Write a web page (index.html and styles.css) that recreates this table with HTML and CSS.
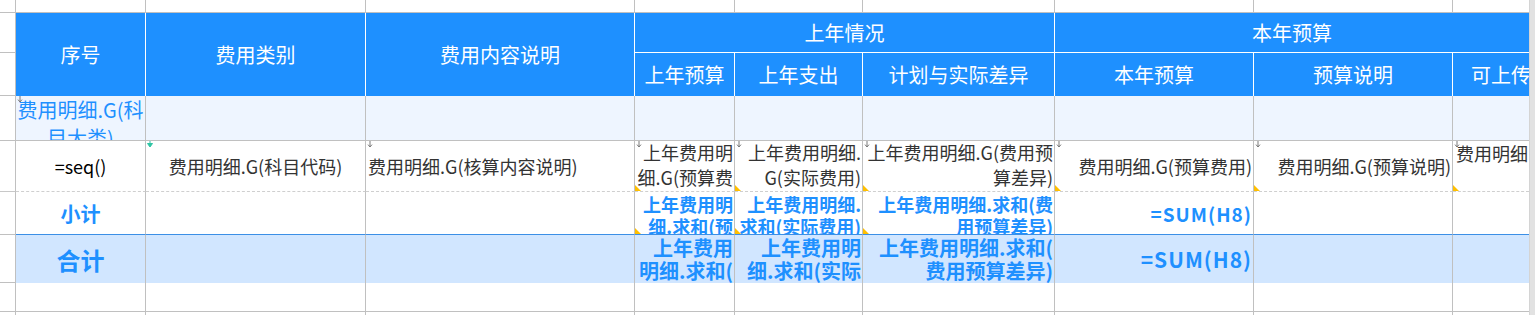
FILE: index.html
```html
<!DOCTYPE html>
<html lang="zh-CN">
<head>
<meta charset="utf-8">
<title>费用明细</title>
<link rel="stylesheet" href="styles.css">
</head>
<body>
<div class="sheet">
  <div class="scroll"></div>

  <!-- row 0 -->
  <div class="g"></div>
  <div class="c"></div><div class="c"></div><div class="c"></div><div class="c"></div>
  <div class="c"></div><div class="c"></div><div class="c"></div><div class="c"></div>
  <div class="c last"></div>

  <!-- header row 1 -->
  <div class="g"></div>
  <div class="h rs2">序号</div>
  <div class="h rs2">费用类别</div>
  <div class="h rs2">费用内容说明</div>
  <div class="h cs3">上年情况</div>
  <div class="h cs3 last">本年预算</div>

  <!-- header row 2 -->
  <div class="g"></div>
  <div class="h">上年预算</div>
  <div class="h">上年支出</div>
  <div class="h">计划与实际差异</div>
  <div class="h">本年预算</div>
  <div class="h">预算说明</div>
  <div class="h last hleft">可上传</div>

  <!-- row 3 : group row -->
  <div class="g"></div>
  <div class="c r3 grp">
    <svg class="mk" width="6" height="7" viewBox="0 0 6 7"><path d="M3 0V6M1 3.6L3 6L5 3.6" fill="none" stroke="#7a7a7a" stroke-width="1"/></svg>
    <span class="grptext">费用明细.G(科<br>目大类)</span>
  </div>
  <div class="c r3"></div><div class="c r3"></div><div class="c r3"></div><div class="c r3"></div>
  <div class="c r3"></div><div class="c r3"></div><div class="c r3"></div><div class="c r3 last"></div>

  <!-- row 4 : detail row -->
  <div class="g dash"></div>
  <div class="c r4 center black">=seq()</div>
  <div class="c r4 center">
    <svg class="mk" width="6" height="7" viewBox="0 0 6 7"><path d="M3 0V5M0.5 2.5H5.5L3 6Z" fill="#2fc5a4" stroke="#2fc5a4" stroke-width="1"/></svg>
    费用明细.G(科目代码)
  </div>
  <div class="c r4 left">
    <svg class="mk" width="6" height="7" viewBox="0 0 6 7"><path d="M3 0V6M1 3.6L3 6L5 3.6" fill="none" stroke="#7a7a7a" stroke-width="1"/></svg>
    费用明细.G(核算内容说明)
  </div>
  <div class="c r4 right">
    <svg class="mk" width="6" height="7" viewBox="0 0 6 7"><path d="M3 0V6M1 3.6L3 6L5 3.6" fill="none" stroke="#7a7a7a" stroke-width="1"/></svg>
    <span class="ml">上年费用明<br>细.G(预算费</span>
    <i class="tri"></i>
  </div>
  <div class="c r4 right">
    <svg class="mk" width="6" height="7" viewBox="0 0 6 7"><path d="M3 0V6M1 3.6L3 6L5 3.6" fill="none" stroke="#7a7a7a" stroke-width="1"/></svg>
    <span class="ml">上年费用明细.<br>G(实际费用)</span>
    <i class="tri"></i>
  </div>
  <div class="c r4 right">
    <svg class="mk" width="6" height="7" viewBox="0 0 6 7"><path d="M3 0V6M1 3.6L3 6L5 3.6" fill="none" stroke="#7a7a7a" stroke-width="1"/></svg>
    <span class="ml">上年费用明细.G(费用预<br>算差异)</span>
    <i class="tri"></i>
  </div>
  <div class="c r4 right">
    <svg class="mk" width="6" height="7" viewBox="0 0 6 7"><path d="M3 0V6M1 3.6L3 6L5 3.6" fill="none" stroke="#7a7a7a" stroke-width="1"/></svg>
    费用明细.G(预算费用)
    <i class="tri"></i>
  </div>
  <div class="c r4 right">
    <svg class="mk" width="6" height="7" viewBox="0 0 6 7"><path d="M3 0V6M1 3.6L3 6L5 3.6" fill="none" stroke="#7a7a7a" stroke-width="1"/></svg>
    费用明细.G(预算说明)
    <i class="tri"></i>
  </div>
  <div class="c r4 top last">
    <svg class="mk" width="6" height="7" viewBox="0 0 6 7"><path d="M3 0V6M1 3.6L3 6L5 3.6" fill="none" stroke="#7a7a7a" stroke-width="1"/></svg>
    <span class="ml">费用明细</span>
    <i class="tri"></i>
  </div>

  <!-- row 5 : subtotal -->
  <div class="g"></div>
  <div class="c r5 center label">小计</div>
  <div class="c r5"></div>
  <div class="c r5"></div>
  <div class="c r5 right">
    <span class="ml">上年费用明<br>细.求和(预</span>
    <i class="tri"></i>
  </div>
  <div class="c r5 right">
    <span class="ml">上年费用明细.<br>求和(实际费用)</span>
    <i class="tri"></i>
  </div>
  <div class="c r5 right">
    <span class="ml">上年费用明细.求和(费<br>用预算差异)</span>
    <i class="tri"></i>
  </div>
  <div class="c r5 right sum">=SUM(H8)</div>
  <div class="c r5"></div>
  <div class="c r5 last"></div>

  <!-- row 6 : total -->
  <div class="g"></div>
  <div class="c r6 center label">合计</div>
  <div class="c r6"></div>
  <div class="c r6"></div>
  <div class="c r6 right"><span class="ml">上年费用<br>明细.求和(</span></div>
  <div class="c r6 right"><span class="ml">上年费用明<br>细.求和(实际</span></div>
  <div class="c r6 right"><span class="ml">上年费用明细.求和(<br>费用预算差异)</span></div>
  <div class="c r6 right sum">=SUM(H8)</div>
  <div class="c r6"></div>
  <div class="c r6 last"></div>

  <!-- row 7 : empty -->
  <div class="g"></div>
  <div class="c"></div><div class="c"></div><div class="c"></div><div class="c"></div>
  <div class="c"></div><div class="c"></div><div class="c"></div><div class="c"></div>
  <div class="c last"></div>

  <!-- row 8 : partial -->
  <div class="g nb"></div>
  <div class="c nb"></div><div class="c nb"></div><div class="c nb"></div><div class="c nb"></div>
  <div class="c nb"></div><div class="c nb"></div><div class="c nb"></div><div class="c nb"></div>
  <div class="c nb last"></div>
</div>
</body>
</html>
```

FILE: styles.css
```css
* {
  box-sizing: border-box;
}

html,
body {
  margin: 0;
  padding: 0;
  background: #ffffff;
}

body {
  font-family: "Noto Sans CJK SC", "Microsoft YaHei", sans-serif;
  overflow: hidden;
}

.sheet {
  display: grid;
  grid-template-columns: 16px 130px 220px 269px 100px 128px 192px 199px 199px 76px 6px;
  grid-template-rows: 13px 40px 43px 45px 51px 43px 48px 29px 3px;
  width: 1535px;
  height: 315px;
  overflow: hidden;
}

.scroll {
  grid-column: 11;
  grid-row: 1 / -1;
  background: #e2e2e2;
  border-left: 1px solid #d4d4d4;
}

/* row-number gutter */
.g {
  border-right: 1px solid #c0c0c0;
  border-bottom: 1px solid #c0c0c0;
}

.g.dash {
  border-bottom-color: #c8c8c8;
}

/* generic cell */
.c {
  position: relative;
  overflow: hidden;
  display: flex;
  align-items: center;
  border-right: 1px solid #c0c0c0;
  border-bottom: 1px solid #c0c0c0;
  white-space: nowrap;
}

.last {
  border-right: none !important;
}

.nb {
  border-bottom: none;
}

/* header */
.h {
  display: flex;
  align-items: center;
  justify-content: center;
  overflow: hidden;
  white-space: nowrap;
  background: #1e90ff;
  color: #ffffff;
  font-size: 20px;
  border-right: 1px solid #ffffff;
}

.rs2 {
  grid-row: span 2;
}

.cs3 {
  grid-column: span 3;
  border-bottom: 1px solid #ffffff;
}

.hleft {
  justify-content: flex-start;
  padding-left: 18px;
}

/* group row */
.r3 {
  background: #eef5ff;
}

.grp {
  align-items: flex-start;
  justify-content: center;
}

.grptext {
  color: #1e90ff;
  font-size: 20px;
  line-height: 28px;
  text-align: center;
}

/* detail row */
.r4 {
  font-size: 18px;
  color: #333333;
  border-bottom: 1px dashed #cfcfcf;
}

.black {
  color: #000000;
}

.center {
  justify-content: center;
}

.left {
  justify-content: flex-start;
  padding-left: 2px;
}

.right {
  justify-content: flex-end;
  text-align: right;
  padding-right: 1px;
}

.top {
  align-items: flex-start;
  padding-left: 3px;
}

.ml {
  display: block;
  line-height: 24px;
}

.r4 .ml {
  line-height: 24.5px;
  margin-top: -3px;
}

.r4.top .ml {
  margin-top: 0;
  line-height: 25px;
}

/* subtotal row */
.r5 {
  color: #1e90ff;
  font-weight: 700;
  font-size: 18px;
  border-bottom: 1px solid #3b8fe6;
}

.r5 .ml {
  line-height: 22px;
  margin-top: 3px;
}

/* total row */
.r6 {
  background: #d1e6ff;
  color: #1e90ff;
  font-weight: 700;
  font-size: 20px;
  border-bottom: none;
}

.r6 .ml {
  line-height: 23px;
  margin-top: 0;
}

.r5.label {
  font-size: 20px;
}

.r6.label {
  font-size: 24px;
}

.sum {
  letter-spacing: 1px;
}

.r5.sum {
  font-size: 19px;
}

.r6.sum {
  font-size: 21px;
}

/* cell markers */
.mk {
  position: absolute;
  top: 0;
  left: 1px;
}

.tri {
  position: absolute;
  left: 0;
  bottom: 0;
  width: 0;
  height: 0;
  border-left: 6px solid #ffbf00;
  border-top: 6px solid transparent;
}
```
